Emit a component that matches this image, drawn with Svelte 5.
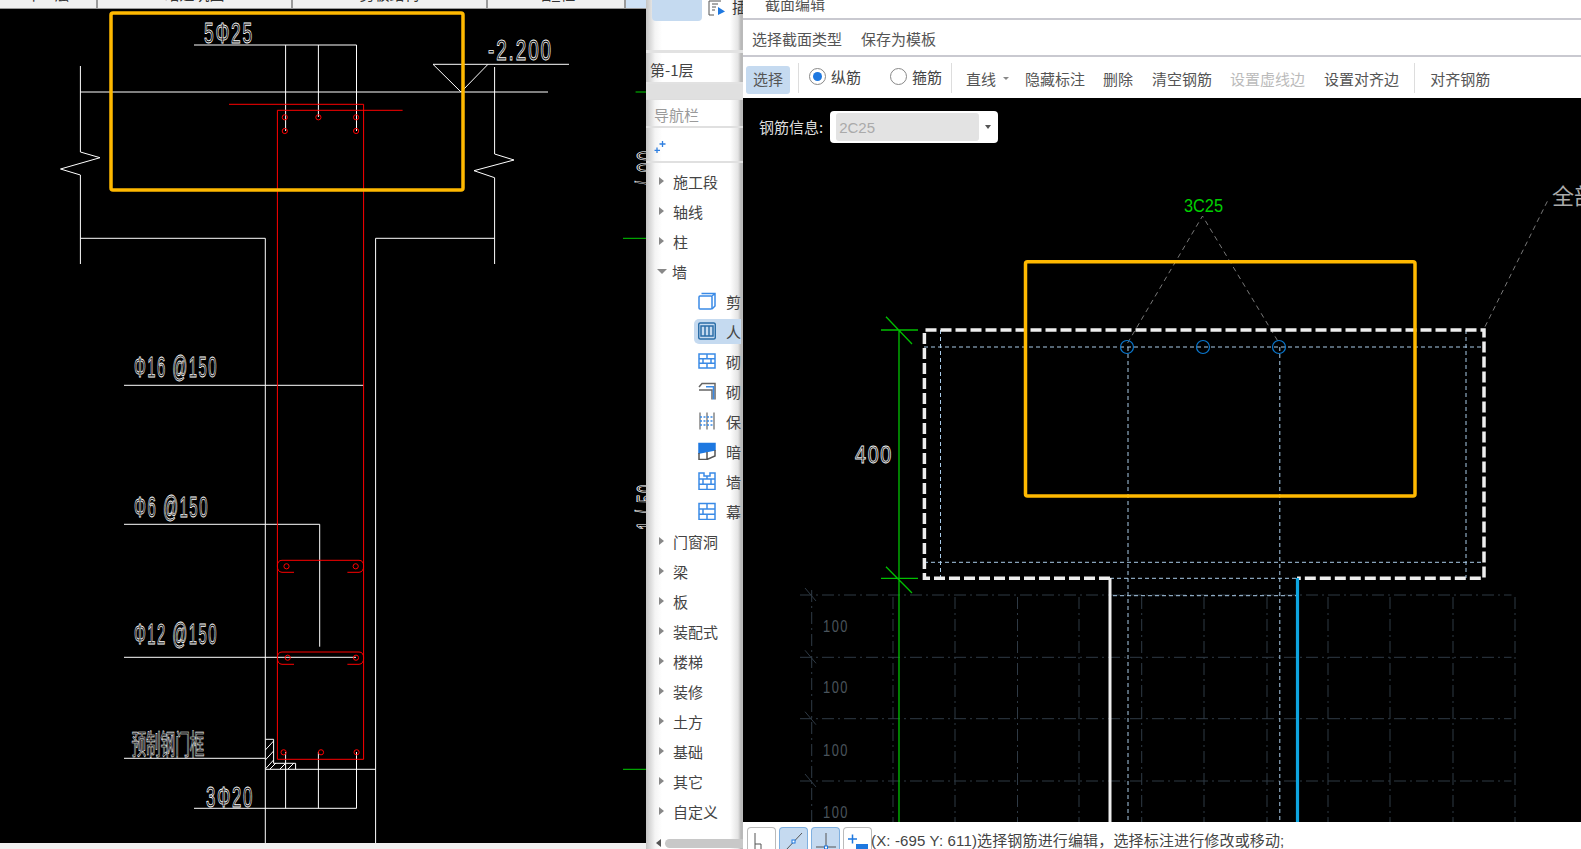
<script>
  const topCells = [
    { label: '平-1层', width: 98 },
    { label: '暗建筑图', width: 195 },
    { label: '剪板结构', width: 195 },
    { label: '墙_柱', width: 138 }
  ];

  const treeTop = ['施工段', '轴线', '柱'];
  const treeBottom = ['门窗洞', '梁', '板', '装配式', '楼梯', '装修', '土方', '基础', '其它', '自定义'];
  const wallItems = [
    { icon: 'box', label: '剪力墙' },
    { icon: 'columns', label: '人防门框墙', active: true },
    { icon: 'brick', label: '砌体墙' },
    { icon: 'angle', label: '砌体加筋' },
    { icon: 'insulate', label: '保温墙' },
    { icon: 'beam', label: '暗梁' },
    { icon: 'notch', label: '墙垛' },
    { icon: 'window', label: '幕墙' }
  ];

  // left drawing, page coordinates
  const whiteLines = [
    'M194 45H356.5', 'M285.6 45V131', 'M318.4 45V117', 'M356.5 45V131',
    'M433 64.3H569', 'M433 64.3L461 92L488 64.3', 'M80.4 92H548',
    'M80.4 66V152L100 157.7L60.5 169L80.4 175V264',
    'M494.6 67V154L514 160L474 170.7L494.6 177.7V264',
    'M80.4 238.3H265.3V843', 'M494.6 238.3H375.6V843',
    'M124 385.3H363.6', 'M124 524.3H319.7V646.7', 'M124 657.3H356', 'M124 758.3H265.3',
    'M265.3 769.3H375.6', 'M285.6 752V808.3', 'M318.4 752V808.3', 'M194 808.3H356.5V752',
    'M265.3 739.3H273.6V763.3H295.6V769.3',
    'M265.3 750L273.6 741', 'M265.3 760L273.6 751', 'M265.3 769L273.6 760',
    'M270 769L276 763', 'M280 769L286 763', 'M288 769L294 763'
  ];
  const redLines = [
    'M229 104.3H363.6V759.3H277.4V110.3H402.6',
    'M294 572.3H282Q277.4 572 277.4 566Q277.4 560.3 282 560.3H359Q363.6 560.3 363.6 566Q363.6 572 359 572.3H347.4',
    'M294 664.3H282Q277.4 664 277.4 658Q277.4 652 282 652H359Q363.6 652 363.6 658Q363.6 664 359 664.3H347.4'
  ];
  const redDots = [
    [284.8, 117.3], [318.4, 117.3], [356.1, 117.3], [284.8, 131], [356.1, 131],
    [286.5, 566.3], [355.7, 566.3], [287.7, 657.7], [356, 657.7],
    [283.6, 752.3], [321, 752.3], [356.6, 752.3]
  ];
  const leftLabels = [
    { text: '5Φ25', x: 204, y: 43, w: 50 },
    { text: '-2.200', x: 488, y: 60, w: 65 },
    { text: 'Φ16 @150', x: 134, y: 377, w: 84 },
    { text: 'Φ6 @150', x: 134, y: 516.7, w: 75 },
    { text: 'Φ12 @150', x: 134, y: 644.3, w: 84 },
    { text: '3Φ20', x: 206, y: 806.7, w: 48 }
  ];

  // right drawing, page coordinates
  const gridRows = [595, 657.3, 718.7, 781];
  const gridCols = [893, 955, 1017.5, 1079, 1141.7, 1204, 1267, 1328, 1390, 1453, 1515];
  const sizeLabels = [631.7, 693, 755.7, 818];
</script>

<div class="screen">
  <section class="left-pane">
    <div class="tab-row">
      {#each topCells as cell}
        <div class="tab-cell" style="width: {cell.width}px"><span>{cell.label}</span></div>
      {/each}
      <div class="tab-end"></div>
    </div>
    <svg class="cad" viewBox="0 9 646 834" width="646" height="834">
      <g fill="none" stroke="#fff" stroke-width="1">
        {#each whiteLines as d}<path {d} />{/each}
      </g>
      <g class="cad-text">
        {#each leftLabels as l}
          <text x={l.x} y={l.y} textLength={l.w} lengthAdjust="spacingAndGlyphs">{l.text}</text>
        {/each}
        <text class="cjk" x="131.4" y="755" textLength="73" lengthAdjust="spacingAndGlyphs">预制钢门框</text>
        <text transform="translate(657 186) rotate(-90)" textLength="37" lengthAdjust="spacingAndGlyphs">/ 00</text>
        <text transform="translate(657 530) rotate(-90)" textLength="47" lengthAdjust="spacingAndGlyphs">1 / 50</text>
      </g>
      <g fill="none" stroke="#f00" stroke-width="1">
        {#each redLines as d}<path {d} />{/each}
        {#each redDots as [cx, cy]}<circle {cx} {cy} r="2.6" />{/each}
      </g>
      <path d="M635.6 92H646M623 238.3H646M623 769.3H646" stroke="#0c0" fill="none" />
      <rect x="111" y="13" width="352" height="177" rx="2" fill="none" stroke="#ffb900" stroke-width="3.5" />
    </svg>
    <div class="left-foot"></div>
  </section>

  <aside class="nav-pane">
    <div class="nav-tool">
      <div class="nav-tool-btn"></div>
      <svg class="tool-icon" viewBox="0 0 18 16" width="18" height="16">
        <path d="M13 1H1V15H6M4 4H10M4 7H8M4 10H7" fill="none" stroke="#555" />
        <path d="M10 7L17 11.5L10 15Z" fill="#1e78e0" />
      </svg>
      <span class="tool-label">插</span>
    </div>
    <div class="floor-row">第-1层</div>
    <div class="nav-band"></div>
    <div class="nav-title">导航栏</div>
    <div class="nav-add">
      <svg viewBox="0 0 12 14" width="12" height="14">
        <path d="M8.5 1V7M5.5 4H11.5M3 7.5V13M0.5 10.3H6" stroke="#2f7fe0" stroke-width="1.3" fill="none" />
      </svg>
    </div>
    <div class="tree">
      {#each treeTop as name}
        <div class="tree-row"><span class="arrow"></span>{name}</div>
      {/each}
      <div class="tree-row"><span class="arrow open"></span>墙</div>
      {#each wallItems as item}
        <div class="tree-child" class:active={item.active}>
          <svg viewBox="0 0 18 18" width="18" height="18" fill="none" stroke="#3a8ae6" stroke-width="1.5">
            {#if item.icon === 'box'}
              <rect x="1" y="4" width="13" height="13" rx="1" />
              <path d="M3.5 1.500H17V14L14 17M14 4L17 1.500" />
            {:else if item.icon === 'columns'}
              <rect x="0.700" y="1" width="16.600" height="16" rx="1.500" stroke="#2b6ea8" />
              <path d="M3 4H15V14H3ZM7 4V14M11 4V14" stroke="#2b6ea8" />
            {:else if item.icon === 'brick'}
              <rect x="1" y="2" width="16" height="14" />
              <path d="M1 6.700H17M1 11.300H17M9 2V6.700M5 6.700V11.300M13 6.700V11.300M9 11.300V16" />
            {:else if item.icon === 'angle'}
              <path d="M1 5L4 1.500H17V17.500M1 8H14V17.500" stroke="#666" />
              <path d="M8 4.700H15.500V17.500" stroke="#3a8ae6" />
            {:else if item.icon === 'insulate'}
              <path d="M2 0.500V17.500M9 0.500V17.500M16 0.500V17.500" stroke="#666" stroke-width="1.200" />
              <path d="M2 5H16M2 9H16M2 13H16" stroke-dasharray="2 1.500" />
            {:else if item.icon === 'beam'}
              <path d="M1 1.500H17V8L1 11Z" fill="#1e78e0" stroke="#1e78e0" />
              <path d="M1 11V17.500H9L17 14V8M9 10V17" stroke="#555" />
            {:else if item.icon === 'notch'}
              <path d="M1 1H6V4H12V1H17V17.500H1ZM1 7H17M1 12.300H17M9 4V7M5 7V12.300M13 7V12.300M9 12.300V17" />
            {:else}
              <rect x="1" y="1.500" width="16" height="16" />
              <path d="M1 7H17M1 12.300H17M9 1.500V7M9 12.300V17.500M5 7V12.300" />
            {/if}
          </svg>
          <span>{item.label}</span>
        </div>
      {/each}
      {#each treeBottom as name}
        <div class="tree-row"><span class="arrow"></span>{name}</div>
      {/each}
    </div>
    <div class="nav-scroll">
      <span class="scroll-left"></span>
      <span class="scroll-thumb"></span>
    </div>
  </aside>

  <main class="editor">
    <div class="title-row">截面编辑</div>
    <div class="menu-row">
      <span>选择截面类型</span>
      <span>保存为模板</span>
    </div>
    <div class="toolbar">
      <button class="tool select">选择</button>
      <i class="sep first"></i>
      <label class="radio first-radio"><b class="on"></b>纵筋</label>
      <label class="radio second-radio"><b></b>箍筋</label>
      <i class="sep second"></i>
      <button class="tool line">直线<em></em></button>
      <button class="tool hide">隐藏标注</button>
      <button class="tool del">删除</button>
      <button class="tool clear">清空钢筋</button>
      <button class="tool off">设置虚线边</button>
      <button class="tool edge">设置对齐边</button>
      <i class="sep third"></i>
      <button class="tool align">对齐钢筋</button>
    </div>
    <div class="canvas">
      <div class="rebar-info">
        <span>钢筋信息:</span>
        <div class="combo"><div class="combo-value">2C25</div><em></em></div>
      </div>
      <svg viewBox="743 98 838 724" width="838" height="724">
        <g class="grid">
          {#each gridRows as y}
            <path d="M800 {y}H1511.500" />
            <path d="M805 {y - 7}L816 {y + 6}" class="solid" />
          {/each}
          <path d="M811.700 590V822" />
          {#each gridCols as x}
            <path d="M{x} 597V822" />
          {/each}
        </g>
        {#each sizeLabels as y}
          <text class="dim" x="823" {y} textLength="26" lengthAdjust="spacingAndGlyphs">100</text>
        {/each}
        <path class="leader" d="M1127.600 343L1202.500 216L1279 343M1485 326.700L1548 200" />
        <text class="green-label" x="1184" y="212" textLength="39" lengthAdjust="spacingAndGlyphs">3C25</text>
        <text class="all-label" x="1552" y="204">全部</text>
        <text class="size" x="855" y="462.700" textLength="38" lengthAdjust="spacingAndGlyphs">400</text>
        <g class="dotted">
          <path d="M924 347H1484M924 562.300H1484M940.500 330V578M1466 330V578" />
          <path d="M1110 578.300H1297M1113 595.700H1297M1128 347V822M1279.800 347V822" />
        </g>
        <g fill="none" stroke="#0a78d0" stroke-width="1.200">
          <circle cx="1127" cy="347" r="6.500" />
          <circle cx="1203" cy="347" r="6.500" />
          <circle cx="1279" cy="347" r="6.500" />
        </g>
        <path d="M899 330V822M881 330H918M881 578.300H918M886 316.700L912 344M886 566.700L912 593" fill="none" stroke="#00c000" stroke-width="1.300" />
        <path class="section" d="M1110 578.300H924.400V330H1484V578.300H1297" />
        <path d="M1110 578V822" stroke="#eee" stroke-width="3" />
        <path d="M1297.500 578V822" stroke="#0ea5e0" stroke-width="3.200" />
        <rect x="1025.500" y="261.700" width="389.500" height="234.300" rx="2" fill="none" stroke="#ffb900" stroke-width="3.500" />
      </svg>
    </div>
    <div class="status-bar">
      <button class="snap" aria-label="正交">
        <svg viewBox="0 0 28 22" width="28" height="22"><path d="M7 3V20H24M7 14H13V20" fill="none" stroke="#555" /></svg>
      </button>
      <button class="snap on" aria-label="中点">
        <svg viewBox="0 0 28 22" width="28" height="22"><path d="M6 20L22 3" fill="none" stroke="#555" /><rect x="12" y="10" width="3" height="3" fill="#fff" stroke="#1e78e0" /></svg>
      </button>
      <button class="snap on" aria-label="垂点">
        <svg viewBox="0 0 28 22" width="28" height="22"><path d="M14 3V17M4 17H24" fill="none" stroke="#555" /><rect x="12.500" y="16" width="3" height="3" fill="#fff" stroke="#1e78e0" /></svg>
      </button>
      <button class="snap" aria-label="增减">
        <svg viewBox="0 0 28 22" width="28" height="22"><path d="M4 9H13M8.500 4.500V13.500" fill="none" stroke="#1e78e0" stroke-width="1.500" /><rect x="12" y="14" width="12" height="5" fill="#1e78e0" /></svg>
      </button>
      <span class="status-text">(X: -695 Y: 611)选择钢筋进行编辑，选择标注进行修改或移动;</span>
    </div>
  </main>
</div>

<style>
  :global(body) {
    margin: 0;
    background: #fff;
  }

  .screen {
    display: grid;
    grid-template-columns: 646px 97px 838px;
    width: 1581px;
    height: 849px;
    overflow: hidden;
    font-family: 'Noto Sans CJK SC', 'Liberation Sans', sans-serif;
    font-size: 15px;
    color: #444;
  }

  /* left drawing */
  .left-pane {
    display: flex;
    flex-direction: column;
    background: #f0f0f0;
    overflow: hidden;
  }

  .tab-row {
    display: flex;
    height: 9px;
    flex: none;
    overflow: hidden;
    background: #f0f0f0;
    border-bottom: 1px solid #999;
    box-sizing: border-box;
  }

  .tab-cell {
    box-sizing: border-box;
    border-right: 2px solid #9a9a9a;
    text-align: center;
    line-height: 15px;
    overflow: hidden;
  }

  .tab-cell span {
    display: block;
    margin-top: -14px;
    color: #333;
  }

  .tab-end {
    flex: 1;
    background: #cfe2f6;
  }

  .cad {
    display: block;
    flex: none;
    background: #000;
  }

  .cad-text text {
    font-family: 'Liberation Sans', sans-serif;
    font-size: 30px;
    letter-spacing: 3px;
    fill: none;
    stroke: #fff;
    stroke-width: 0.9;
  }

  .cad-text text.cjk {
    font-family: 'Noto Sans CJK SC', sans-serif;
    font-size: 28px;
    letter-spacing: 0;
    stroke-width: 0.7;
  }

  .left-foot {
    flex: 1;
    background: #f0f0f0;
  }

  /* navigation */
  .nav-pane {
    display: flex;
    flex-direction: column;
    overflow: hidden;
    background: linear-gradient(90deg, #c4c4c4 0, #f4f4f4 9px, #fff 16px, #fff 84px, #e4e4e4 92px, #b8b8b8 95px, #bbb 97px);
  }

  .nav-tool {
    display: flex;
    height: 53px;
    flex: none;
    align-items: flex-start;
    box-sizing: border-box;
    border-bottom: 3px solid #e2e2e2;
    position: relative;
  }

  .nav-tool-btn {
    width: 50px;
    height: 21px;
    margin-left: 6px;
    background: #c5daf0;
    border-radius: 0 0 4px 4px;
    flex: none;
  }

  .tool-icon {
    margin: 0 0 0 6px;
    flex: none;
  }

  .tool-label {
    font-size: 15px;
    margin-left: 6px;
    line-height: 14px;
    color: #333;
  }

  .floor-row {
    height: 31px;
    flex: none;
    box-sizing: border-box;
    padding-left: 4px;
    line-height: 33px;
    color: #444;
    border-bottom: 2px solid #e2e2e2;
  }

  .nav-band {
    height: 15px;
    flex: none;
    background: #e0e0e0;
    border-bottom: 1px solid #ddd;
  }

  .nav-title {
    height: 28px;
    flex: none;
    box-sizing: border-box;
    padding-left: 8px;
    line-height: 29px;
    color: #9a9a9a;
    border-bottom: 2px solid #e0e0e0;
  }

  .nav-add {
    height: 35px;
    flex: none;
    box-sizing: border-box;
    padding: 12px 0 0 8px;
    border-bottom: 2px solid #e0e0e0;
  }

  .nav-add svg {
    display: block;
  }

  .tree {
    flex: 1;
    overflow: hidden;
    padding-top: 3px;
  }

  .tree-row {
    display: flex;
    align-items: center;
    height: 30px;
    padding-left: 13px;
    white-space: nowrap;
    color: #444;
  }

  .arrow {
    width: 0;
    height: 0;
    margin-right: 9px;
    border-left: 5px solid #888;
    border-top: 4px solid transparent;
    border-bottom: 4px solid transparent;
    flex: none;
  }

  .arrow.open {
    margin: 1px 5px 0 -2px;
    border-top: 5px solid #888;
    border-left: 5px solid transparent;
    border-right: 5px solid transparent;
    border-bottom: 0;
  }

  .tree-child {
    display: flex;
    align-items: center;
    height: 30px;
    margin-left: 48px;
    padding-left: 4px;
    gap: 10px;
    white-space: nowrap;
    overflow: hidden;
    width: 43px;
    border-radius: 5px 0 0 5px;
  }

  .tree-child svg {
    flex: none;
  }

  .tree-child.active {
    background: #c5daf0;
    height: 25px;
    margin-top: 2.500px;
    margin-bottom: 2.500px;
  }

  .nav-scroll {
    display: flex;
    align-items: center;
    height: 10px;
    flex: none;
    padding-left: 10px;
    margin-bottom: 1px;
  }

  .scroll-left {
    width: 0;
    height: 0;
    border-right: 5px solid #555;
    border-top: 4px solid transparent;
    border-bottom: 4px solid transparent;
    margin-right: 4px;
  }

  .scroll-thumb {
    width: 79px;
    height: 9px;
    background: #c8c8c8;
    border-radius: 5px 0 0 5px;
  }

  /* section editor */
  .editor {
    display: flex;
    flex-direction: column;
    overflow: hidden;
    background: #fff;
  }

  .title-row {
    height: 20px;
    flex: none;
    box-sizing: border-box;
    padding-left: 22px;
    line-height: 7px;
    border-bottom: 2px solid #c9c9d0;
    color: #555;
  }

  .menu-row {
    display: flex;
    gap: 19px;
    height: 37px;
    flex: none;
    box-sizing: border-box;
    padding-left: 9px;
    line-height: 37px;
    border-bottom: 2px solid #c9c9d0;
    color: #555;
  }

  .toolbar {
    display: flex;
    align-items: center;
    height: 41px;
    flex: none;
    color: #555;
  }

  .tool {
    box-sizing: border-box;
    height: 28px;
    padding: 0 0 2px;
    border: 0;
    background: none;
    font: inherit;
    color: inherit;
    line-height: 26px;
    margin-top: 4px;
    white-space: nowrap;
  }

  .tool.select {
    width: 44px;
    margin-left: 3px;
    background: #c5daf0;
    border-radius: 3px;
  }

  .sep {
    width: 1px;
    height: 30px;
    background: #ddd;
    flex: none;
  }

  .sep.first { margin-left: 8px; }
  .sep.second { margin-left: 9px; }
  .sep.third { margin-left: 15px; }

  .radio {
    display: flex;
    align-items: center;
    gap: 5px;
    color: #444;
    margin-top: -3px;
  }

  .radio b {
    width: 15px;
    height: 15px;
    border: 1px solid #888;
    border-radius: 50%;
    background: #fff;
    position: relative;
    flex: none;
  }

  .radio b.on::after {
    content: '';
    position: absolute;
    inset: 3px;
    border-radius: 50%;
    background: #1e78e0;
  }

  .first-radio { margin-left: 10px; }
  .second-radio { margin-left: 29px; }

  .tool.line { margin-left: 14px; display: flex; align-items: center; }
  .tool.line em {
    width: 0;
    height: 0;
    margin-left: 7px;
    border-top: 3px solid #888;
    border-left: 3px solid transparent;
    border-right: 3px solid transparent;
  }
  .tool.hide { margin-left: 16px; }
  .tool.del { margin-left: 18px; }
  .tool.clear { margin-left: 19px; }
  .tool.off { margin-left: 18px; color: #bbb; }
  .tool.edge { margin-left: 19px; }
  .tool.align { margin-left: 15px; }

  .canvas {
    position: relative;
    height: 724px;
    flex: none;
    background: #000;
    overflow: hidden;
  }

  .canvas > svg {
    display: block;
  }

  .rebar-info {
    position: absolute;
    left: 16px;
    top: 13px;
    display: flex;
    align-items: center;
    gap: 7px;
    color: #ddd;
  }

  .rebar-info span {
    margin-top: -2px;
  }

  .combo {
    display: flex;
    align-items: center;
    width: 168px;
    height: 32px;
    box-sizing: border-box;
    padding: 2px 6px;
    background: #fff;
    border-radius: 4px;
  }

  .combo-value {
    width: 143px;
    height: 28px;
    box-sizing: border-box;
    padding-left: 3px;
    line-height: 29px;
    background: #e3e3e3;
    border-radius: 3px;
    color: #aaa;
    font-family: 'Liberation Sans', sans-serif;
    flex: none;
  }

  .combo em {
    margin-left: 6px;
    border-top: 4px solid #555;
    border-left: 3px solid transparent;
    border-right: 3px solid transparent;
  }

  .grid path {
    fill: none;
    stroke: #2f3a45;
    stroke-dasharray: 12 4 2 4;
  }

  .grid path.solid {
    stroke-dasharray: none;
  }

  text.dim {
    font-family: 'Liberation Sans', sans-serif;
    font-size: 17px;
    letter-spacing: 2px;
    fill: #4a545c;
  }

  .leader {
    fill: none;
    stroke: #777;
    stroke-dasharray: 5 4;
  }

  text.green-label {
    font-family: 'Liberation Sans', sans-serif;
    font-size: 19px;
    fill: #00d000;
  }

  text.all-label {
    font-family: 'Liberation Serif', 'Noto Sans CJK SC', serif;
    font-size: 22px;
    fill: #aaa;
  }

  text.size {
    font-family: 'Liberation Sans', sans-serif;
    font-size: 24px;
    letter-spacing: 2px;
    fill: none;
    stroke: #eee;
    stroke-width: 0.9;
  }

  .dotted path {
    fill: none;
    stroke: #a9cbe8;
    stroke-dasharray: 4 3;
  }

  .section {
    fill: none;
    stroke: #eee;
    stroke-width: 3.500;
    stroke-dasharray: 11 4;
  }

  .status-bar {
    display: flex;
    align-items: flex-start;
    height: 27px;
    flex: none;
    padding-left: 4px;
    gap: 3px;
    background: #fff;
    overflow: hidden;
  }

  .snap {
    width: 29px;
    height: 26px;
    margin-top: 5px;
    padding: 0;
    background: #fff;
    border: 1px solid #bbb;
    border-bottom: 0;
    border-radius: 4px 4px 0 0;
    flex: none;
  }

  .snap svg {
    display: block;
  }

  .snap.on {
    background: #c5daf0;
    border-color: #7fb0e0;
  }

  .status-text {
    margin-left: -4px;
    line-height: 38px;
    letter-spacing: 0.15px;
    white-space: nowrap;
    color: #444;
    font-family: 'Liberation Sans', 'Noto Sans CJK SC', sans-serif;
  }
</style>
